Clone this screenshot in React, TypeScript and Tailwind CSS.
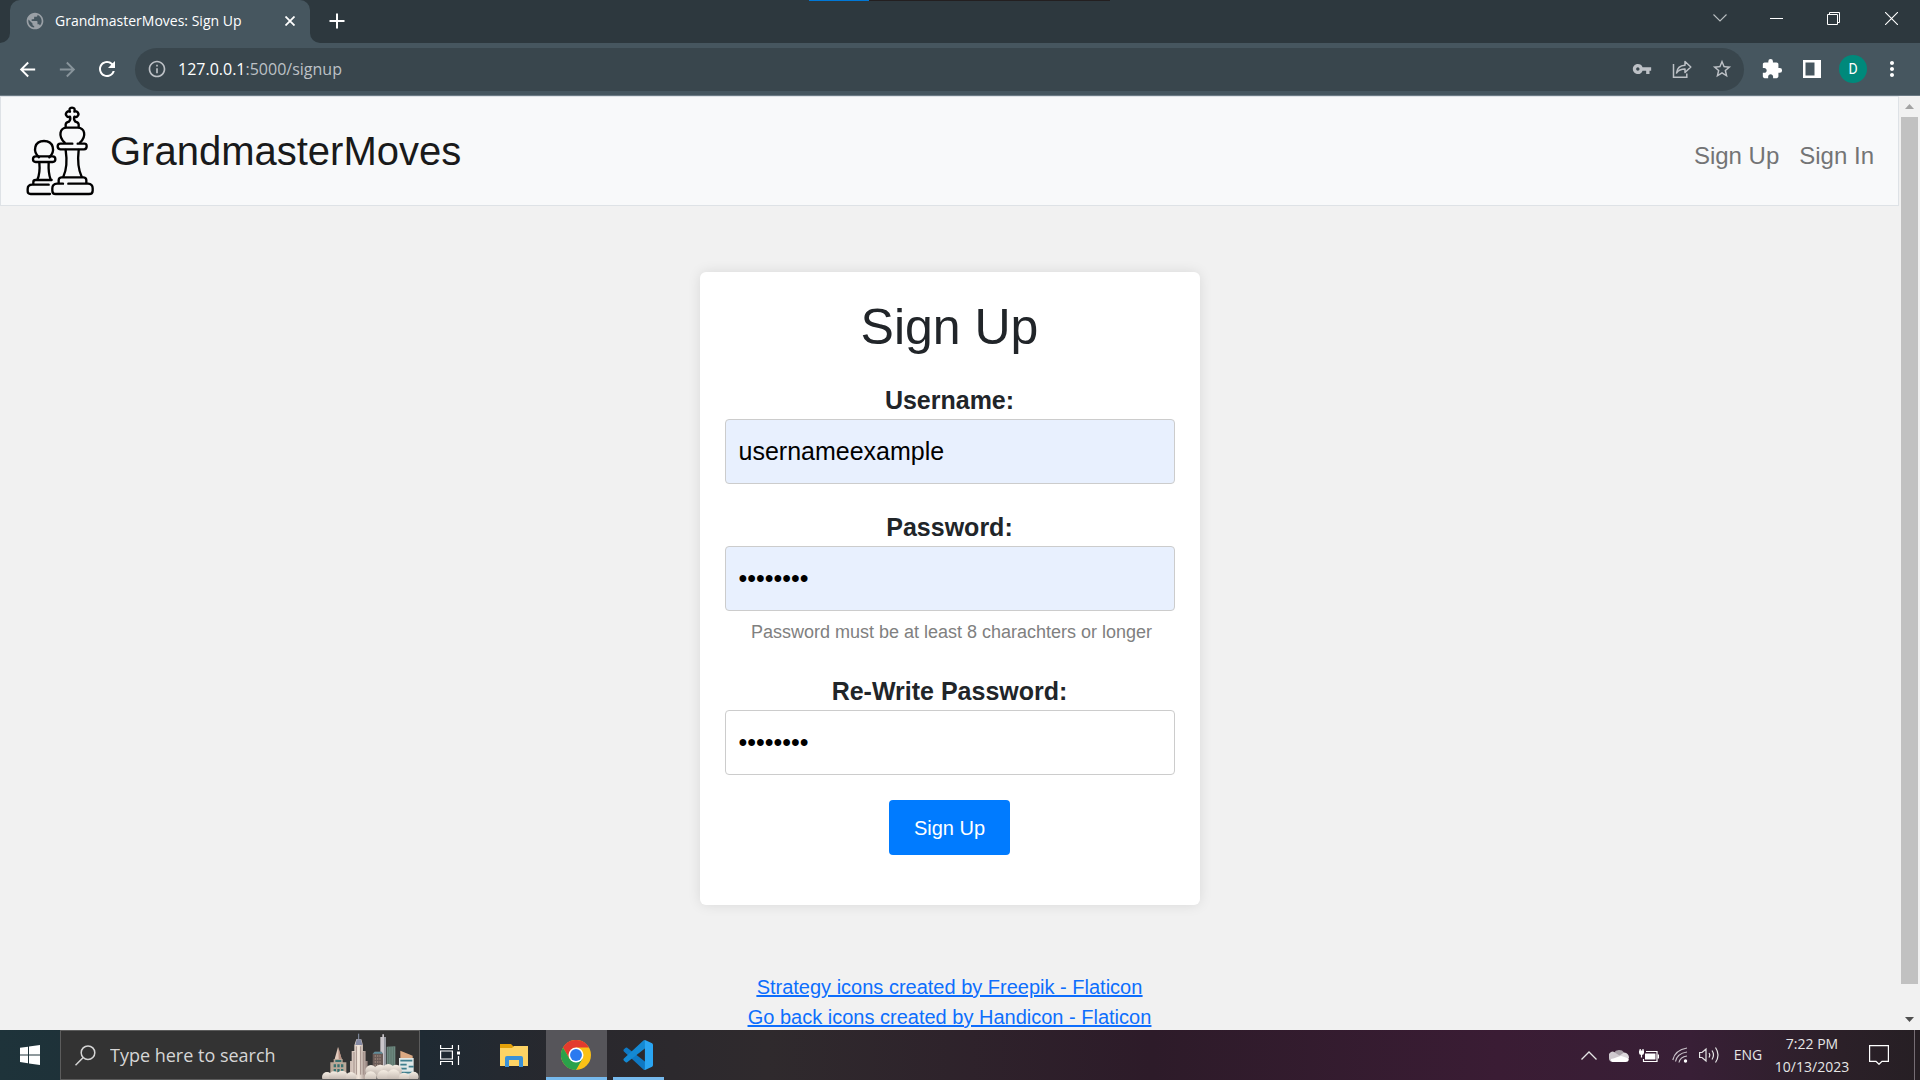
import type { ReactNode } from "react";
import {
  MdArrowBack,
  MdArrowForward,
  MdExtension,
  MdInfoOutline,
  MdMoreVert,
  MdPublic,
  MdRefresh,
  MdStarBorder,
  MdVpnKey,
} from "react-icons/md";

const UI_FONT = "font-['Open_Sans','Noto_Sans',sans-serif]";
const PAGE_FONT = "font-['Liberation_Sans',Arial,sans-serif]";

function IconButton({ label, className, children }: { label: string; className: string; children: ReactNode }) {
  return (
    <button type="button" aria-label={label} className={`flex shrink-0 items-center justify-center ${className}`}>
      {children}
    </button>
  );
}

function TabStrip() {
  return (
    <div className="relative flex h-[43px] items-start bg-[#2d383e] text-white">
      <div className="absolute left-[809px] top-0 flex h-px w-[301px] bg-[#231f20]">
        <div className="h-px w-[60px] bg-[#0078d7]" />
      </div>
      <div className="flex h-full w-[10px] bg-[#46565f]">
        <div className="h-full w-full rounded-br-[10px] bg-[#2d383e]" />
      </div>
      <div className="flex h-full w-[300px] items-center rounded-t-[10px] bg-[#46565f] pb-px pl-[15px] pr-[10px]">
        <MdPublic className="size-5 text-[#9aa0a6]" />
        <span className="ml-[10px] flex-1 text-sm">GrandmasterMoves: Sign Up</span>
        <IconButton label="Close tab" className="size-5">
          <svg viewBox="0 0 10 10" className="size-[10px]" stroke="currentColor" strokeWidth="1.8">
            <path d="M0.5 0.5 9.5 9.5M9.5 0.5 0.5 9.5" />
          </svg>
        </IconButton>
      </div>
      <div className="flex h-full w-[10px] bg-[#46565f]">
        <div className="h-full w-full rounded-bl-[10px] bg-[#2d383e]" />
      </div>
      <IconButton label="New tab" className="h-[42px] w-[34px]">
        <svg viewBox="0 0 16 16" className="size-4" stroke="currentColor" strokeWidth="2">
          <path d="M8 0.5V15.5M0.5 8H15.5" />
        </svg>
      </IconButton>
      <div className="ml-auto flex h-9">
        <IconButton label="Search tabs" className="w-[57px]">
          <svg viewBox="0 0 14 8" className="h-2 w-[14px]" fill="none" stroke="#b9bec1" strokeWidth="1.1">
            <path d="M0.5 0.5 7 7 13.500 0.500" />
          </svg>
        </IconButton>
        <IconButton label="Minimize" className="w-[57px]">
          <svg viewBox="0 0 13 1" className="h-px w-[13px]">
            <path d="M0 0H13V1H0Z" fill="white" />
          </svg>
        </IconButton>
        <IconButton label="Restore" className="w-[57px]">
          <svg viewBox="0 0 13 13" className="size-[13px]" fill="none" stroke="white">
            <path d="M0.5 2.500H10.500V12.500H0.500ZM2.500 2.500V0.500H12.500V10.500H10.500" />
          </svg>
        </IconButton>
        <IconButton label="Close" className="w-[58px]">
          <svg viewBox="0 0 13 13" className="size-[13px]" stroke="white" strokeWidth="1.100">
            <path d="M0 0 13 13M13 0 0 13" />
          </svg>
        </IconButton>
      </div>
    </div>
  );
}

function Toolbar() {
  return (
    <div className="flex h-[53px] items-center border-b border-[#6b7a84] bg-[#46565f] pl-[7px] pr-[10px] text-white">
      <IconButton label="Back" className="w-10">
        <MdArrowBack className="size-[23px]" />
      </IconButton>
      <IconButton label="Forward" className="w-10 text-[#88949b]">
        <MdArrowForward className="size-[23px]" />
      </IconButton>
      <IconButton label="Reload" className="w-10">
        <MdRefresh className="size-6" />
      </IconButton>
      <div className="ml-2 flex h-[43px] flex-1 items-center rounded-full bg-[#39464d] pl-3 pr-[2px] text-[#bdc1c6]">
        <MdInfoOutline className="size-5 shrink-0" />
        <div role="textbox" aria-label="Address" contentEditable suppressContentEditableWarning className="ml-[11px] flex-1 text-base">
          <span className="text-white">127.0.0.1</span>:5000/signup
        </div>
        <IconButton label="Saved passwords" className="w-10">
          <MdVpnKey className="size-5" />
        </IconButton>
        <IconButton label="Share" className="w-10">
          <svg viewBox="0 0 20 18" className="h-[18px] w-5" fill="none" stroke="currentColor" strokeWidth="1.500">
            <path d="M1.500 4V17.200H14.800V13.500" />
            <path d="M4.500 13C5 8.500 8 5.500 13 5.200V1.500L18.800 7 13 12.500V9C9.500 9 6.500 10 4.500 13Z" strokeLinejoin="round" />
          </svg>
        </IconButton>
        <IconButton label="Bookmark" className="w-10">
          <MdStarBorder className="size-[22px]" />
        </IconButton>
      </div>
      <IconButton label="Extensions" className="ml-2 w-10">
        <MdExtension className="size-[22px]" />
      </IconButton>
      <IconButton label="Side panel" className="w-10">
        <svg viewBox="0 0 18 18" className="size-[18px]">
          <path fillRule="evenodd" d="M0 0H18V18H0ZM2.500 2.500V15.500H11.500V2.500Z" fill="white" />
        </svg>
      </IconButton>
      <IconButton label="Profile" className="w-[42px]">
        <span className="flex size-7 items-center justify-center rounded-full bg-[#00897b] font-['Roboto',sans-serif] text-sm">D</span>
      </IconButton>
      <IconButton label="Menu" className="w-9">
        <MdMoreVert className="size-6" />
      </IconButton>
    </div>
  );
}

function ChessLogo() {
  return (
    <svg viewBox="0 0 270 315" className="h-[105px] w-[90px]" fill="none" stroke="black" strokeWidth="7" strokeLinecap="round" strokeLinejoin="round">
      <path d="M72 178C52 160 58 129 87 129S122 160 103 178" />
      <rect x="54" y="175" width="67" height="17" rx="8" />
      <path d="M73 193C75 215 73 232 67 245M101 193C100 215 102 232 107 245" />
      <path d="M55 258V252Q55 246 62 246H110" />
      <path d="M101 260H52Q38 260 38 273V280Q38 288 47 288H105" />
      <path d="M144 257H126Q112 258 112 271V278Q112 288 122 288H222Q233 288 233 278V271Q233 258 219 257H160" />
      <path d="M131 254V247Q131 239 139 238H206Q214 239 214 247V254" />
      <path d="M152 156C157 190 154 217 145 236M191 156C187 190 191 217 200 236" />
      <path d="M172 137H136Q128 137 128 145T136 154H207Q215 154 215 145T207 137H188" />
      <path d="M149 134C128 113 135 90 155 89H188C209 90 216 113 195 134" />
      <path d="M152 86V79Q153 73 162 71Q168 65 165 56Q159 59 155 54Q150 49 155 43Q160 38 165 41Q160 29 171 29T178 41Q184 38 188 43Q193 49 188 54Q184 59 178 56Q175 65 181 71Q190 73 191 79V86" />
    </svg>
  );
}

function SiteNav() {
  return (
    <nav className="flex items-center border border-[#dee2e6] bg-[#f8f9fa] pb-[2px] pl-[14px] pr-6 pt-px">
      <a href="#home" className="flex items-center gap-[5px] text-[40px] text-[#191a1b]">
        <ChessLogo />
        GrandmasterMoves
      </a>
      <div className="ml-auto flex gap-5 pt-[10px] text-2xl text-[#737475]">
        <a href="#signup">Sign Up</a>
        <a href="#signin">Sign In</a>
      </div>
    </nav>
  );
}

function Field({ id, label, type, value, filled }: { id: string; label: string; type: string; value: string; filled: boolean }) {
  return (
    <div className="flex flex-col">
      <label htmlFor={id} className="text-center text-[25px] font-bold leading-[37px]">
        {label}
      </label>
      <input
        id={id}
        type={type}
        defaultValue={value}
        className={`h-[65px] w-full rounded border border-[#ccc] px-[13px] text-[25px] text-black ${filled ? "bg-[#e8f0fe]" : "bg-white"}`}
      />
    </div>
  );
}

function SignUpPage() {
  return (
    <main className={`min-w-0 flex-1 overflow-hidden bg-[#f1f1f1] text-[#212529] ${PAGE_FONT}`}>
      <SiteNav />
      <form className="mx-auto mt-[66px] w-[500px] rounded-md bg-white px-[25px] pb-[50px] pt-[25px] shadow-[0_0_13px_rgba(0,0,0,0.1)]">
        <h1 className="mb-[25px] text-center text-[50px] leading-[60px]">Sign Up</h1>
        <Field id="username" label="Username:" type="text" value="usernameexample" filled />
        <div className="mt-[25px]">
          <Field id="password" label="Password:" type="password" value="password" filled />
        </div>
        <p className="pb-px pl-1 pt-[6px] text-center text-[18px] leading-[30px] text-[#808080]">
          Password must be at least 8 charachters or longer
        </p>
        <div className="mt-[25px]">
          <Field id="confirm" label="Re-Write Password:" type="password" value="password" filled={false} />
        </div>
        <button type="button" className="mx-auto mt-[25px] block h-[55px] rounded bg-[#007bff] px-[25px] text-xl text-white">
          Sign Up
        </button>
      </form>
      <footer className="mt-[67px] flex flex-col items-center text-xl leading-[30px] text-[#0d6efd] underline">
        <a href="#strategy">Strategy icons created by Freepik - Flaticon</a>
        <a href="#goback">Go back icons created by Handicon - Flaticon</a>
      </footer>
    </main>
  );
}

function Scrollbar() {
  return (
    <div className="flex w-[21px] flex-col items-center bg-[#f1f1f1]">
      <IconButton label="Scroll up" className="h-[21px]">
        <svg viewBox="0 0 9 5" className="h-[5px] w-[9px]">
          <path d="M4.500 0 9 5H0Z" fill="#a3a3a3" />
        </svg>
      </IconButton>
      <div className="mb-6 w-[17px] flex-1 bg-[#c1c1c1]" />
      <IconButton label="Scroll down" className="h-[22px]">
        <svg viewBox="0 0 9 5" className="h-[5px] w-[9px]">
          <path d="M0 0H9L4.500 5Z" fill="#505050" />
        </svg>
      </IconButton>
    </div>
  );
}

function CityArt() {
  return (
    <svg viewBox="0 0 345 156" className="h-[52px] w-[115px]">
      <defs>
        <linearGradient id="cloud" x1="0" y1="0" x2="0" y2="1">
          <stop offset="0" stopColor="#f6eee4" />
          <stop offset="1" stopColor="#b5a9a2" />
        </linearGradient>
        <linearGradient id="tower" x1="0" y1="0" x2="1" y2="0">
          <stop offset="0" stopColor="#c9b8b0" />
          <stop offset="0.500" stopColor="#f1e6db" />
          <stop offset="1" stopColor="#8f7c78" />
        </linearGradient>
      </defs>
      <path d="M211 115V27H217V19H222V27H228V115Z" fill="#c9c5ca" />
      <path d="M222 27H228V115H222Z" fill="#989aa2" />
      <path d="M230 56 256 55V118H230Z" fill="#6f8a82" />
      <path d="M236 56V118M243 56V118M250 56V118" stroke="#52695f" strokeWidth="2" />
      <path d="M188 77 194 71H214L219 77V120H188Z" fill="#6b5c58" />
      <path d="M188 77 194 71H214L219 77Z" fill="#5f8c9a" />
      <path d="M194 84H213M194 93H213M194 102H213M194 111H213" stroke="#9a857b" strokeWidth="4" strokeDasharray="4 3" />
      <path d="M84 57 95 93H74Z" fill="#e2cbbd" />
      <path d="M85 57 95 93H86Z" fill="#b58f80" />
      <path d="M71 93H98V103H109V140H61V103H71Z" fill="#b9a898" />
      <path d="M71 109H78V118H71ZM82 109H89V118H82ZM93 109H100V118H93ZM71 123H78V132H71ZM82 123H89V132H82ZM93 123H100V132H93ZM76 96H94V102H76Z" fill="#39706f" />
      <path d="M146 17V34" stroke="#8893a8" strokeWidth="3" />
      <path d="M139 34H154L159 52V69H167V99H173V156H120V99H125V69H133V52Z" fill="url(#tower)" />
      <path d="M140 34H153L157 51H136Z" fill="#848aa4" />
      <path d="M132 72V140M139 55V140M152 55V140M160 72V140" stroke="#a08d87" strokeWidth="3" />
      <path d="M271 90V68L308 83V90Z" fill="#dba983" />
      <path d="M267 90H311V150H267Z" fill="#dfe7e7" />
      <path d="M271 98H307M271 110H290M296 116H311M271 122H290M271 134H307" stroke="#3f7e8d" strokeWidth="5" />
      <g fill="url(#cloud)">
        <circle cx="211" cy="130" r="20" />
        <circle cx="235" cy="126" r="18" />
        <circle cx="258" cy="128" r="18" />
        <circle cx="183" cy="128" r="17" />
        <circle cx="51" cy="147" r="15" />
        <circle cx="72" cy="145" r="15" />
        <circle cx="96" cy="145" r="17" />
        <circle cx="123" cy="148" r="16" />
        <circle cx="182" cy="148" r="18" />
        <circle cx="221" cy="146" r="20" />
        <circle cx="251" cy="144" r="20" />
        <circle cx="282" cy="150" r="16" />
        <circle cx="311" cy="146" r="15" />
      </g>
    </svg>
  );
}

function ChromeLogo() {
  return (
    <svg viewBox="0 0 48 48" className="size-[30px]">
      <circle cx="24" cy="24" r="24" fill="#fbc116" />
      <path d="M24 24 13.600 30 3.200 12A24 24 0 0 1 44.800 12H24Z" fill="#e33b2e" />
      <path d="M3.200 12A24 24 0 0 0 24 48L34.400 30 24 24 13.600 30Z" fill="#2aa14a" />
      <circle cx="24" cy="24" r="12" fill="white" />
      <circle cx="24" cy="24" r="9.500" fill="#2a7af0" />
    </svg>
  );
}

function Tray() {
  return (
    <div className="ml-auto flex items-center text-[#e6e6e6]">
      <IconButton label="Show hidden icons" className="w-[30px]">
        <svg viewBox="0 0 16 9" className="h-[9px] w-4" fill="none" stroke="currentColor" strokeWidth="1.300">
          <path d="M0.500 8.500 8 1 15.500 8.500" />
        </svg>
      </IconButton>
      <IconButton label="OneDrive" className="w-[30px]">
        <svg viewBox="0 0 20 13" className="h-[13px] w-5">
          <path d="M5 4A5.500 4.500 0 0 1 15 3.500L16 7 10 8Z" fill="#a79fa7" />
          <path d="M0 9A4 4.500 0 0 1 6.500 4L13 8 4 13Q0 13 0 9Z" fill="#d0cad0" />
          <path d="M10 7 15 3.500Q20 4 20 9L15 10Z" fill="#dcd8dc" />
          <path d="M3.500 13Q1.500 12 2 10Q5 9.500 8.500 8T13 7.200L19.800 9.500Q20 13 16.500 13Z" fill="white" />
        </svg>
      </IconButton>
      <IconButton label="Battery" className="w-[30px]">
        <svg viewBox="0 0 20 15" className="h-[15px] w-5" fill="none" stroke="white" strokeWidth="1.200">
          <path d="M7 3.500H18V13.500H4.500V11M19.500 6.500V10.500M1.200 1V3M4 1V3M2.500 6V9.500" />
          <path d="M0 2.500H5V5Q5 7 2.500 7T0 5Z" fill="white" stroke="none" />
          <path d="M6 5.500H16.500V11.500H6Z" fill="white" stroke="none" />
        </svg>
      </IconButton>
      <IconButton label="Network" className="w-8">
        <svg viewBox="0 0 16 16" className="size-4" fill="none" stroke="#c9c2c9" strokeWidth="1.200">
          <path d="M0.800 13Q3 3 15 1M3.500 14.500Q5 6.500 15 5M7 15.500Q8 10 15 9" />
          <circle cx="13.500" cy="14" r="1.700" fill="white" stroke="none" />
        </svg>
      </IconButton>
      <IconButton label="Volume" className="w-[26px]">
        <svg viewBox="0 0 20 18" className="h-[18px] w-5" fill="none" stroke="currentColor" strokeWidth="1.200">
          <path d="M0.600 6.500H3L7 3V15L3 11.500H0.600ZM10 7Q11.500 9 10 11.500M13 4.500Q16 9 13 13.500M16.500 1.500Q21.500 9 16.500 16.500" />
        </svg>
      </IconButton>
      <button type="button" className="w-[52px] text-sm">
        ENG
      </button>
      <button type="button" className="w-[76px] whitespace-nowrap text-center text-sm leading-[23px]">
        7:22 PM
        <br />
        10/13/2023
      </button>
      <IconButton label="Notifications" className="w-[58px]">
        <svg viewBox="0 0 20 20" className="size-5" fill="none" stroke="white" strokeWidth="1.200">
          <path d="M0.600 0.600H19.400V16.400H13L10 19.300 7 16.400H0.600Z" />
        </svg>
      </IconButton>
      <div className="ml-[6px] mr-[5px] h-[50px] w-px bg-[#756d74]" />
    </div>
  );
}

function Taskbar() {
  return (
    <footer className="flex h-[50px] shrink-0 items-center bg-[linear-gradient(90deg,#1e333a_0%,#1f2a33_22%,#29282d_30%,#2f2a2d_40%,#2d1b29_60%,#3a1c34_78%,#381f36_88%,#2b2028_96%,#261f24_100%)]">
      <IconButton label="Start" className="w-[60px]">
        <svg viewBox="0 0 20 20" className="size-5" fill="white">
          <path d="M0 2.800 8 1.700V9.400H0ZM9 1.500 20 0V9.400H9ZM0 10.400H8V18.200L0 17.100ZM9 10.400H20V20L9 18.400Z" />
        </svg>
      </IconButton>
      <div className="flex h-full w-[360px] items-center overflow-hidden border border-[#5c5c5c] bg-[#333] pl-[14px] text-[#d6d6d6]">
        <svg viewBox="0 0 21 21" className="size-[21px] shrink-0" fill="none" stroke="currentColor" strokeWidth="1.500">
          <circle cx="13" cy="7.700" r="6.800" />
          <path d="M8.200 12.500 0.500 20.300" />
        </svg>
        <input
          aria-label="Search"
          placeholder="Type here to search"
          className="ml-[14px] w-[200px] shrink-0 bg-transparent text-lg placeholder:text-[#d6d6d6]"
        />
        <div className="-mb-px shrink-0 self-end">
          <CityArt />
        </div>
      </div>
      <IconButton label="Task view" className="w-[60px]">
        <svg viewBox="0 0 20 20" className="size-5" fill="none" stroke="white" strokeWidth="1.200">
          <path d="M0.600 0V3.500H12.400V0M0.600 6H12.400V14H0.600ZM0.600 20V16.500H12.400V20M18.500 0V5M18.500 11V20" />
          <path d="M17 6.500H20V9.500H17Z" fill="white" stroke="none" />
        </svg>
      </IconButton>
      <IconButton label="File Explorer" className="ml-1 w-[62px] pr-[2px]">
        <svg viewBox="0 0 28 24" className="h-6 w-7">
          <path d="M0 1H11L14 4V7H0Z" fill="#e3a008" />
          <path d="M0 5H12L14 3H28V23H0Z" fill="#fdd364" />
          <path d="M5 24V15Q5 13 7 13H21Q23 13 23 15V24H19V17H9V24Z" fill="#3a91d8" />
        </svg>
      </IconButton>
      <button type="button" aria-label="Google Chrome" className="flex h-full w-[61px] items-center justify-center border-b-[3px] border-[#76b9ed] bg-[#56555a] pr-px pt-[3px]">
        <ChromeLogo />
      </button>
      <button type="button" aria-label="Visual Studio Code" className="ml-[6px] flex h-full w-[51px] items-center justify-center border-b-[3px] border-[#76b9ed] pr-[2px] pt-[3px]">
        <svg viewBox="0 0 100 100" className="size-[30px]">
          <path d="M3 31 9 26Q11 24 14 26L75 73V97Q72 101 68 98L3 38Q0 35 3 31Z" fill="#0f79c4" />
          <path d="M3 69 9 74Q11 76 14 74L75 27V3Q72-1 68 2L3 62Q0 65 3 69Z" fill="#1489d3" />
          <path d="M75 1 97 11Q100 13 100 17V83Q100 87 97 89L75 99Q71 101 68 98Q73 101 73 95V5Q73-1 68 2Q71-1 75 1Z" fill="#2aa5f2" />
        </svg>
      </button>
      <Tray />
    </footer>
  );
}

export default function App() {
  return (
    <div className={`flex h-screen flex-col overflow-hidden ${UI_FONT}`}>
      <header className="shrink-0">
        <TabStrip />
        <Toolbar />
      </header>
      <div className="flex min-h-0 flex-1">
        <SignUpPage />
        <Scrollbar />
      </div>
      <Taskbar />
    </div>
  );
}
